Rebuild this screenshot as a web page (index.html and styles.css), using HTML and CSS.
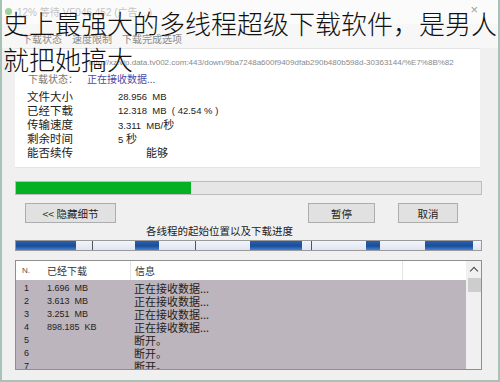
FILE: index.html
```html
<!DOCTYPE html>
<html lang="zh-CN">
<head>
  <meta charset="UTF-8">
  <meta name="viewport" content="width=device-width, initial-scale=1.0">
  <title>下载进度</title>
  <link rel="stylesheet" href="styles.css">
</head>
<body>
  <div class="window">
    <div class="titlebar">
      <span class="app-icon"></span>
      <span class="title-text">12% 等待 VF046 452 (广告 ...)</span>
      <span class="close-btn">×</span>
    </div>

    <div class="tabs">
      <span class="tab">下载状态</span>
      <span class="tab">速度限制</span>
      <span class="tab">下载完成选项</span>
    </div>

    <div class="panel">
      <div class="url-row">http://xz.vip.data.tv002.com:443/down/9ba7248a600f9409dfab290b480b598d-30363144/%E7%8B%82</div>
      <div class="status-row">
        <span class="status-label">下载状态：</span>
        <span class="status-value">正在接收数据...</span>
      </div>
      <div class="info-row"><span class="info-label">文件大小</span><span class="info-value">28.956&nbsp; MB</span></div>
      <div class="info-row"><span class="info-label">已经下载</span><span class="info-value">12.318&nbsp; MB&nbsp; ( 42.54 % )</span></div>
      <div class="info-row"><span class="info-label">传输速度</span><span class="info-value">3.311&nbsp; MB/<span class="cjk">秒</span></span></div>
      <div class="info-row"><span class="info-label">剩余时间</span><span class="info-value">5 <span class="cjk">秒</span></span></div>
      <div class="info-row"><span class="info-label">能否续传</span><span class="info-value resume">能够</span></div>
    </div>

    <div class="progress">
      <div class="progress-fill" style="width: 175px"></div>
    </div>

    <div class="buttons">
      <button class="btn details-btn">&lt;&lt; 隐藏细节</button>
      <button class="btn pause-btn">暂停</button>
      <button class="btn cancel-btn">取消</button>
    </div>

    <div class="caption">各线程的起始位置以及下载进度</div>

    <div class="threads">
      <span class="seg done" style="width: 60px"></span>
      <span class="seg" style="width: 16px"></span>
      <span class="seg start" style="width: 43px"></span>
      <span class="seg done" style="width: 24px"></span>
      <span class="seg" style="width: 36px"></span>
      <span class="seg start" style="width: 55px"></span>
      <span class="seg done" style="width: 52px"></span>
      <span class="seg" style="width: 9px"></span>
      <span class="seg start" style="width: 55px"></span>
      <span class="seg done" style="width: 14px"></span>
      <span class="seg" style="width: 45px"></span>
      <span class="seg done" style="width: 48px"></span>
      <span class="seg" style="width: 8px"></span>
    </div>

    <div class="table">
      <div class="table-main">
        <div class="thead">
          <span class="col-n">N.</span>
          <span class="col-size">已经下载</span>
          <span class="col-info">信息</span>
          <span class="col-rest"></span>
        </div>
        <div class="tbody">
          <div class="row"><span class="col-n">1</span><span class="col-size">1.696&nbsp; MB</span><span class="col-info">正在接收数据...</span></div>
          <div class="row"><span class="col-n">2</span><span class="col-size">3.613&nbsp; MB</span><span class="col-info">正在接收数据...</span></div>
          <div class="row"><span class="col-n">3</span><span class="col-size">3.251&nbsp; MB</span><span class="col-info">正在接收数据...</span></div>
          <div class="row"><span class="col-n">4</span><span class="col-size">898.185&nbsp; KB</span><span class="col-info">正在接收数据...</span></div>
          <div class="row"><span class="col-n">5</span><span class="col-size"></span><span class="col-info">断开。</span></div>
          <div class="row"><span class="col-n">6</span><span class="col-size"></span><span class="col-info">断开。</span></div>
          <div class="row"><span class="col-n">7</span><span class="col-size"></span><span class="col-info">断开。</span></div>
        </div>
      </div>
      <div class="scrollbar">
        <span class="scroll-arrow"></span>
        <span class="scroll-thumb"></span>
      </div>
    </div>
  </div>

  <div class="overlay">史上最强大的多线程超级下载软件，是男人<br>就把她搞大</div>
</body>
</html>
```

FILE: styles.css
```css
* {
  box-sizing: border-box;
  margin: 0;
  padding: 0;
}

body {
  width: 500px;
  height: 382px;
  overflow: hidden;
  font-family: "Liberation Sans", "Noto Sans CJK SC", sans-serif;
  background-color: #f0f0f0;
  color: #222;
  position: relative;
}

.cjk {
  font-family: "Noto Sans CJK SC", sans-serif;
}

.window {
  width: 500px;
  height: 382px;
  border: 2px solid #a7c2b7;
  border-top: none;
  background-color: #f0f0f0;
}

/* title bar */
.titlebar {
  height: 24px;
  display: flex;
  align-items: center;
  padding-left: 3px;
  background-color: #fbfbfb;
}

.app-icon {
  width: 7px;
  height: 7px;
  border-radius: 50%;
  background-color: #9fd19a;
  margin-right: 5px;
  margin-top: -2px;
}

.title-text {
  font-size: 10px;
  color: #c4c4c4;
  flex: 1;
  margin-top: -2px;
}

.close-btn {
  font-size: 13px;
  color: #a0a0a0;
  margin-right: 20px;
  margin-top: -6px;
}

/* tabs */
.tabs {
  height: 24px;
  display: flex;
  align-items: flex-end;
  padding: 0 0 2px 20px;
  gap: 10px;
  background-color: #f7f7f7;
  font-family: "Noto Sans CJK SC", sans-serif;
  font-size: 10px;
  color: #8a8a8a;
}

/* info panel */
.panel {
  width: 465px;
  height: 120px;
  margin-left: 13px;
  padding: 7px 0 0 12px;
  background-color: #fff;
  border-top: 1px solid #e4e4e4;
  border-bottom: 1px solid #e4e4e4;
}

.url-row {
  height: 14px;
  line-height: 14px;
  padding-left: 62px;
  font-size: 8px;
  color: #8a8a8a;
  white-space: nowrap;
  overflow: hidden;
  width: 442px;
}

.status-row {
  height: 15px;
  display: flex;
  align-items: center;
  font-family: "Noto Sans CJK SC", sans-serif;
  font-size: 10px;
  margin-top: 1px;
  margin-bottom: 3px;
}

.status-label {
  width: 60px;
  padding-left: 1px;
  color: #777;
}

.status-value {
  color: #4a4aa8;
}

.info-row {
  height: 14px;
  display: flex;
  align-items: center;
}

.info-label {
  width: 91px;
  font-family: "Noto Sans CJK SC", sans-serif;
  font-size: 11.5px;
  color: #222;
}

.info-value {
  font-size: 9.5px;
  color: #222;
  white-space: pre;
}

.info-value .cjk {
  font-size: 11px;
}

.resume {
  padding-left: 28px;
  font-family: "Noto Sans CJK SC", sans-serif;
  font-size: 11px;
}

/* overall progress */
.progress {
  width: 467px;
  height: 14px;
  margin: 13px 0 0 13px;
  border: 1px solid #bcbcbc;
  background-color: #e6e6e6;
}

.progress-fill {
  height: 100%;
  background-color: #06b025;
}

/* buttons */
.buttons {
  display: flex;
  height: 20px;
  margin: 8px 0 0 23px;
}

.btn {
  height: 20px;
  border: 1px solid #adadad;
  background-color: #e1e1e1;
  font-family: "Noto Sans CJK SC", sans-serif;
  font-size: 10.5px;
  color: #222;
}

.details-btn {
  width: 91px;
}

.pause-btn {
  width: 67px;
  margin-left: 192px;
}

.cancel-btn {
  width: 60px;
  margin-left: 23px;
}

/* thread map */
.caption {
  height: 15px;
  line-height: 15px;
  padding-left: 144px;
  font-family: "Noto Sans CJK SC", sans-serif;
  font-size: 10.5px;
  color: #222;
}

.threads {
  display: flex;
  width: 467px;
  height: 11px;
  margin: 2px 0 0 13px;
  border: 1px solid #9a9a9a;
  background-color: #e9ecf5;
}

.seg {
  height: 100%;
  background: linear-gradient(#f2f4fa, #dfe4f1);
}

.seg.start {
  border-left: 1px solid #555;
}

.seg.done {
  background: linear-gradient(#2d5fb0, #1b4b99 55%, #3b86d8);
}

/* connections table */
.table {
  display: flex;
  width: 467px;
  height: 110px;
  margin: 9px 0 0 13px;
  border: 1px solid #8f8f8f;
  background-color: #fff;
}

.table-main {
  width: 450px;
  display: flex;
  flex-direction: column;
}

.thead {
  height: 19px;
  flex-shrink: 0;
  display: flex;
  align-items: center;
  background-color: #fff;
  font-family: "Noto Sans CJK SC", sans-serif;
  font-size: 10px;
  color: #333;
}

.thead .col-n {
  font-family: "Liberation Sans", sans-serif;
  font-size: 8px;
  color: #555;
}

.thead .col-info,
.thead .col-rest {
  height: 100%;
  display: flex;
  align-items: center;
  border-left: 1px solid #e3e3e3;
}

.col-n {
  width: 31px;
  padding-left: 6px;
}

.col-size {
  width: 83px;
}

.col-info {
  width: 272px;
  padding-left: 4px;
}

.col-rest {
  flex: 1;
}

.tbody {
  flex: 1;
  overflow: hidden;
  padding-top: 1px;
  background-color: #bdb5bd;
}

.row {
  height: 13px;
  flex-shrink: 0;
  display: flex;
  align-items: center;
  font-size: 9px;
  color: #222;
}

.row .col-n {
  padding-left: 8px;
}

.row .col-info {
  font-family: "Noto Sans CJK SC", sans-serif;
  font-size: 11px;
}

.scrollbar {
  flex: 1;
  display: flex;
  flex-direction: column;
  align-items: center;
  background-color: #f0f0f0;
  border-left: 1px solid #f0f0f0;
}

.scroll-arrow {
  width: 6px;
  height: 6px;
  margin: 7px 0 4px;
  border-left: 1.5px solid #444;
  border-top: 1.5px solid #444;
  transform: rotate(45deg);
}

.scroll-thumb {
  width: 13px;
  height: 14px;
  background-color: #cdcdcd;
}

/* caption text laid over the screenshot */
.overlay {
  position: absolute;
  top: 5px;
  left: 3px;
  font-family: "Noto Sans CJK SC", sans-serif;
  font-weight: 300;
  font-size: 26px;
  line-height: 36px;
  color: #111;
  white-space: nowrap;
}
```
